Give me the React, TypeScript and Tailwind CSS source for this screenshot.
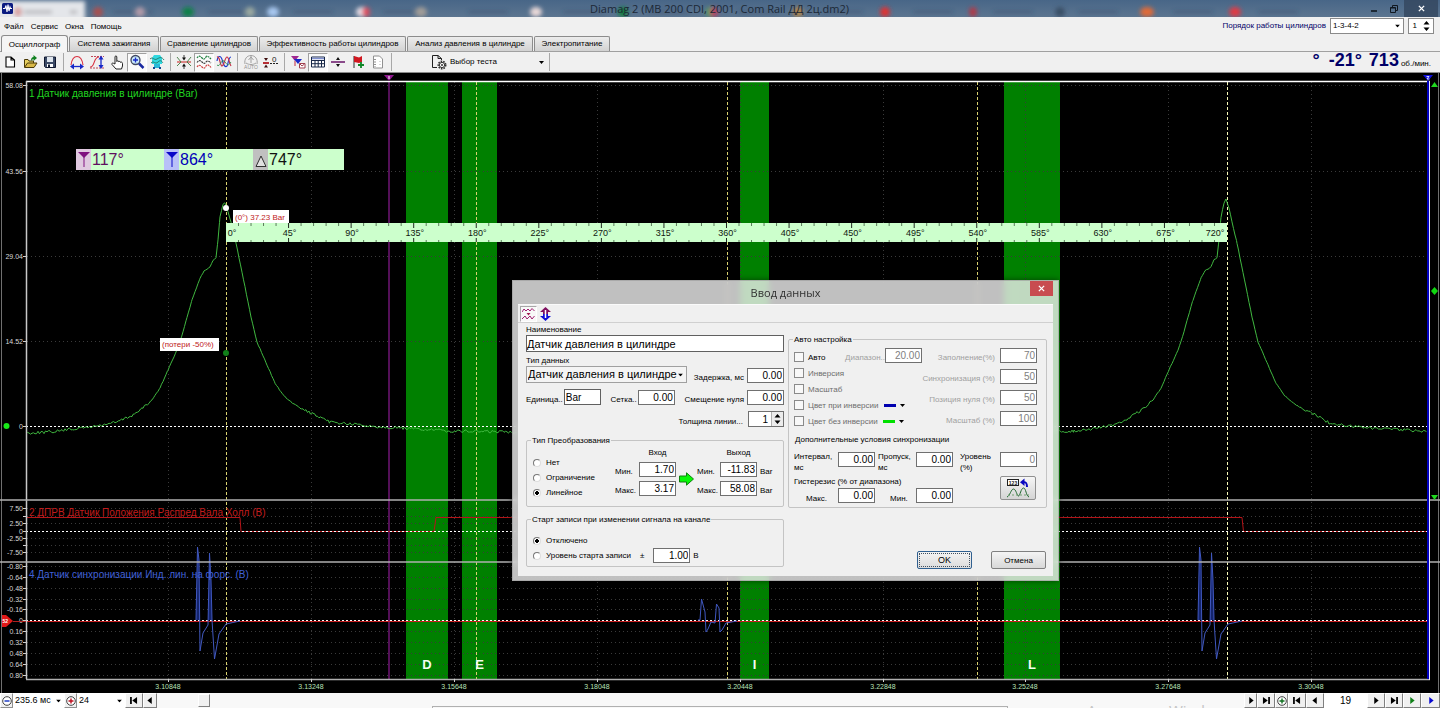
import { useId, type ReactNode } from "react";

/* ---------- shared controls ---------- */

function Dropdown({ label, value, className, selectClass }: { label: string; value: string; className: string; selectClass?: string }) {
  return (
    <div className={`relative ${className}`}>
      <select
        aria-label={label}
        defaultValue={value}
        className={`block h-full w-full appearance-none rounded-none bg-transparent outline-none ${selectClass ?? ""}`}
      >
        <option>{value}</option>
      </select>
      <svg viewBox="0 0 5 3" className="pointer-events-none absolute right-[3px] top-1/2 h-[3px] w-[5px] -translate-y-1/2">
        <path d="M0 0H5L2.5 3Z" fill="#000" />
      </svg>
    </div>
  );
}

function NumField({ label, value, disabled, className }: { label: string; value: string; disabled?: boolean; className?: string }) {
  return (
    <input
      aria-label={label}
      defaultValue={value}
      disabled={disabled}
      className={`h-[15px] w-[37px] shrink-0 rounded-none border border-[#707070] bg-white px-0 pr-px text-right text-[10px] leading-[12px] outline-none disabled:text-[#808080] ${className ?? ""}`}
    />
  );
}

function Radio({ name, label, checked, children }: { name: string; label: string; checked?: boolean; children?: ReactNode }) {
  const id = useId();
  return (
    <div className="flex h-[15px] items-center">
      <input
        id={id}
        type="radio"
        name={name}
        defaultChecked={checked}
        className="h-[8px] w-[8px] shrink-0 appearance-none rounded-full border border-[#777] border-r-[#ddd] border-b-[#ddd] bg-white checked:bg-[radial-gradient(circle,#000_40%,#fff_50%)]"
      />
      <label htmlFor={id} className="ml-[5px] whitespace-nowrap">{label}</label>
      {children}
    </div>
  );
}

function Check({ label, disabled, children }: { label: string; disabled?: boolean; children?: ReactNode }) {
  const id = useId();
  return (
    <div className="flex h-[16px] items-center">
      <input id={id} type="checkbox" disabled={disabled} className="h-[10px] w-[10px] shrink-0 appearance-none border border-[#8a8a8a] bg-[#f8f8f8]" />
      <label htmlFor={id} className={`ml-[4px] whitespace-nowrap ${disabled ? "text-[#6d6d6d]" : "text-black"}`}>{label}</label>
      {children}
    </div>
  );
}

function SpinArrows() {
  return (
    <svg viewBox="0 0 7 12" className="h-[12px] w-[7px] shrink-0">
      <path d="M3.5 1L6.5 4.5H.5ZM3.5 11L6.5 7.5H.5Z" fill="#000" />
    </svg>
  );
}

/* ---------- title, menu, tabs ---------- */

const blobs: [number, string, number][] = [
  [18, "#d8a0a0", 4], [98, "#a85050", 5], [140, "#b09aa8", 5], [188, "#10804a", 6], [250, "#9aa8a0", 5],
  [273, "#a8c8f0", 6], [362, "#e8e0e8", 6], [366, "#e05060", 4], [421, "#a09c98", 6], [536, "#e8d8d8", 6],
  [623, "#10803a", 5], [710, "#50a060", 4], [714, "#c04060", 4], [798, "#b8884a", 5], [885, "#e03030", 5],
  [973, "#b03a48", 4], [1060, "#3a5068", 5], [1147, "#e06a38", 7], [1235, "#e03a44", 6],
];

function TitleBar() {
  return (
    <header className="relative flex h-[17px] items-center overflow-hidden bg-[#4a6789]">
      <svg viewBox="0 0 1440 17" preserveAspectRatio="none" className="absolute inset-0 h-full w-full">
        <defs>
          <filter id="haze" x="-20%" y="-100%" width="140%" height="300%"><feGaussianBlur stdDeviation="2" /></filter>
          <linearGradient id="glass" x1="0" y1="0" x2="0" y2="1">
            <stop offset="0" stopColor="#486687" /><stop offset="1" stopColor="#5c7590" />
          </linearGradient>
        </defs>
        <rect width="1440" height="17" fill="url(#glass)" />
        <g filter="url(#haze)">
          <rect x="-5" y="1" width="90" height="22" fill="#e4e6ea" />
          <path d="M24 12H52M70 12H77" stroke="#b0b0b4" strokeWidth="3" />
          {[105, 200, 285, 375, 460, 555, 640, 730, 815, 905, 985, 1070, 1165, 1250].map((x) => (
            <path key={x} d={`M${x + 8} 12H${x + 48}`} stroke="#2c4260" strokeWidth="2" opacity="0.5" />
          ))}
          {blobs.map(([x, c, r]) => <ellipse key={x} cx={x} cy="12" rx={r} ry="5" fill={c} />)}
        </g>
      </svg>
      <svg viewBox="0 0 11 11" className="relative ml-[2px] h-[11px] w-[11px]">
        <rect width="11" height="11" rx="1.5" fill="#0a1a80" />
        <path d="M1 5.5H3L4 2.5L5 9L6 1.5L7 8L8 4L8.6 5.5H10" stroke="#fff" strokeWidth="1.1" fill="none" />
      </svg>
      <h1 className="relative flex-1 pb-px pl-[62px] text-center font-['Open_Sans','Noto_Sans',sans-serif] text-[11px] leading-[15px] text-[#1c2836]">
        Diamag 2 (MB 200 CDI, 2001, Com Rail ДД 2ц.dm2)
      </h1>
      <div className="relative flex h-full text-[#101820]">
        <button aria-label="Свернуть" className="flex h-full w-[20px] items-center justify-center">
          <svg viewBox="0 0 8 8" className="h-[8px] w-[8px]"><path d="M1 6H7" stroke="currentColor" strokeWidth="1.6" /></svg>
        </button>
        <button aria-label="Восстановить" className="flex h-full w-[20px] items-center justify-center">
          <svg viewBox="0 0 8 8" className="h-[8px] w-[8px]"><path d="M.5 2.5H5.5V7.5H.5ZM.5 3H5.5M2.5 2V.5H7.5V5.5H6" stroke="currentColor" fill="none" /></svg>
        </button>
        <button aria-label="Закрыть" className="mr-[2px] flex h-full w-[34px] items-center justify-center bg-[#33465e]/80 text-white">
          <svg viewBox="0 0 8 8" className="h-[7px] w-[7px]"><path d="M1 1L7 7M7 1L1 7" stroke="currentColor" strokeWidth="1.6" /></svg>
        </button>
      </div>
    </header>
  );
}

function MenuRow() {
  return (
    <div className="flex h-[20px] justify-between text-[8px]">
      <nav className="flex items-center gap-[7px] pl-[4px]">
        {["Файл", "Сервис", "Окна", "Помощь"].map((m) => <button key={m} className="leading-[12px]">{m}</button>)}
      </nav>
      <div className="flex items-start gap-[4px] pr-[6px] pt-px">
        <span className="leading-[16px] text-[#000068]">Порядок работы цилиндров</span>
        <Dropdown label="Порядок работы цилиндров" value="1-3-4-2" className="h-[16px] w-[74px] border border-[#8a8a8a] bg-white" selectClass="pl-[2px]" />
        <div className="flex h-[16px] w-[26px] items-center border border-[#8a8a8a] bg-white pr-[3px]">
          <input aria-label="Цилиндр" defaultValue="1" className="w-0 flex-1 bg-transparent pr-[6px] text-right outline-none" />
          <SpinArrows />
        </div>
      </div>
    </div>
  );
}

function Tabs() {
  const tabs: [string, string][] = [
    ["Система зажигания", "w-[90px]"],
    ["Сравнение цилиндров", "w-[98px]"],
    ["Эффективность работы цилиндров", "w-[147px]"],
    ["Анализ давления в цилиндре", "w-[126px]"],
    ["Электропитание", "w-[76px]"],
  ];
  return (
    <div role="tablist" className="flex h-[15px] items-end gap-px border-b border-[#a0a0a0] pl-px text-[8px]">
      <button role="tab" aria-selected className="relative z-10 -mb-px h-[17px] w-[67px] rounded-t-[3px] border border-b-0 border-[#8c8c8c] bg-[#f5f5f5] leading-[15px]">Осциллограф</button>
      {tabs.map(([t, w]) => (
        <button key={t} role="tab" aria-selected={false} className={`h-[15px] whitespace-nowrap rounded-t-[2px] border border-b-0 border-[#8c8c8c] bg-gradient-to-b from-[#ececec] to-[#d2d2d2] leading-[14px] ${w}`}>{t}</button>
      ))}
    </div>
  );
}

/* ---------- toolbar ---------- */

function Sep() {
  return <span className="flex w-[7px] justify-center"><span className="h-[18px] w-px bg-[#a8a8a8]" /></span>;
}

function Tool({ label, pressed, children }: { label: string; pressed?: boolean; children: ReactNode }) {
  return (
    <button aria-label={label} className={`flex h-[19px] w-[20px] items-center justify-center ${pressed ? "border border-[#a0a0a0] border-b-white border-r-white bg-[#fafafa]" : ""}`}>
      <svg viewBox="0 0 16 16" className="h-[16px] w-[16px] shrink-0 overflow-visible" fill="none">{children}</svg>
    </button>
  );
}

function Toolbar() {
  return (
    <div className="flex h-[21px] items-center justify-between border-b border-[#8a8a8a] bg-[#f0f0f0]">
      <div className="flex items-center">
        <Tool label="Новый"><path d="M4 3H9L12.500 6V13H4ZM9 3V6H12.500" fill="#fff" stroke="#000" strokeWidth="1.100" /></Tool>
        <Tool label="Открыть">
          <path d="M2.500 13V5.500H6L7 7H11.500V9" fill="#e8d060" stroke="#4a3a08" />
          <path d="M2.500 13.500L5.500 9H15L12 13.500Z" fill="#d8b848" stroke="#4a3a08" />
          <path d="M9 7C9 4 10 3 11.500 3V1L15 4L11.500 7V5C10.500 5 10 6 9 7Z" fill="#108020" />
        </Tool>
        <Tool label="Сохранить">
          <path d="M2.500 3H13.500V13.500H3.500L2.500 12.500Z" fill="#3c4a66" stroke="#101830" />
          <path d="M5 3H11V8H5Z" fill="#dfe6ee" /><path d="M5 10H11V13H5Z" fill="#fff" /><path d="M6 10.500H8V13H6Z" fill="#101830" />
        </Tool>
        <Sep />
        <Tool label="Период">
          <path d="M2 11C3 4 6 2.500 8 2.500S13 4 14 11" stroke="#d83040" strokeWidth="1.100" />
          <path d="M4 12.500H12" stroke="#1828c8" strokeWidth="1.300" /><path d="M1 12.500L5 9.500V15.500ZM15 12.500L11 9.500V15.500Z" fill="#1828c8" />
        </Tool>
        <Tool label="Амплитуда">
          <path d="M1 13C6 14 4 3 10 3" stroke="#d83040" strokeWidth="1.100" /><path d="M2 2.500H15M1 14H15" stroke="#c04858" strokeDasharray="2 1" />
          <path d="M12 5V12" stroke="#1828c8" strokeWidth="1.300" /><path d="M12 1.500L9.500 5.500H14.500ZM12 15L9.500 11H14.500Z" fill="#1828c8" />
        </Tool>
        <Tool label="Рука">
          <path d="M6 10V3C6 1.500 7.800 1.500 7.800 3V7.500C8 6.500 9.800 6.500 9.800 8C10 7.200 11.600 7.200 11.700 8.500C12 7.800 13.500 8 13.500 9.500V12L12.500 15H7L3 10.500C2.500 9.500 3.500 8.500 4.500 9.300Z" fill="#fff" stroke="#222" />
        </Tool>
        <Tool label="Лупа" pressed>
          <circle cx="6.500" cy="6" r="4.500" fill="#c8e8fa" stroke="#404860" strokeWidth="1.300" />
          <path d="M4 6H9M6.500 3.500V8.500" stroke="#1828c8" strokeWidth="1.300" /><path d="M10 9.500L14.500 14" stroke="#1828a0" strokeWidth="2.500" />
        </Tool>
        <Tool label="Печать сигналов">
          <path d="M5 1H11L13 4V10H3V4Z" fill="#30d8e0" /><path d="M5 10H11V14H5Z" fill="#28b8d8" />
          <path d="M1 5C4 2 5 7 8 5S13 3 15 6M2 9C5 6 6 11 9 8S13 8 14 9" stroke="#207868" strokeWidth="0.900" />
          <path d="M4 14H6M10 14H12" stroke="#104890" strokeWidth="2" />
        </Tool>
        <Sep />
        <Tool label="Сжать">
          <path d="M1 8H15" stroke="#d04040" strokeWidth="1.200" /><path d="M1 3L5 8L1 12M15 3L11 8L15 12" stroke="#407840" strokeWidth="0.900" />
          <path d="M8 6.500L6 3.500H10ZM8 9.500L6 12.500H10Z" fill="#101010" /><path d="M8 1V4M8 12V15" stroke="#101010" strokeWidth="0.800" />
        </Tool>
        <Tool label="Раздельно" pressed>
          <path d="M1 4C3 1 4 2 6 4S9 5 10 3S13 3 15 5" stroke="#208040" strokeWidth="1.200" strokeDasharray="2 0.700" />
          <path d="M1 8.500C3 6 4 6 6 8S9 9.500 10 8S13 7 15 9" stroke="#404040" strokeWidth="1.200" strokeDasharray="2 0.700" />
          <path d="M1 13C3 10.500 4 11 6 13S9 14 10 12S13 11 15 13.500" stroke="#d04040" strokeWidth="1.200" strokeDasharray="2 0.700" />
        </Tool>
        <Tool label="Совместно">
          <path d="M1 7C2 1 5 1 6.500 7S11 15 12 9S14 3 15 3" stroke="#1838d0" strokeWidth="1.200" />
          <path d="M1 3C4 2 4 12 6 12S9 3 11 3S13 9 15 12" stroke="#c83048" strokeWidth="1.200" />
          <path d="M1 11C4 14 5 5 8 7S11 14 15 8" stroke="#309050" strokeWidth="0.900" />
        </Tool>
        <Sep />
        <Tool label="Авто">
          <path d="M2 10C1 5 4 1.500 8 1.500S15 5 14 10M8 2V9M5.500 6L8 3L10.500 6M3 9C6 11 10 11 13 9" stroke="#a0a0a0" />
          <text x="8" y="15" textAnchor="middle" fontSize="5" fill="#909090">AUTO</text>
        </Tool>
        <Tool label="Ноль">
          <path d="M0 9H6" stroke="#b01820" strokeWidth="1.800" /><path d="M3 7L1 4H5ZM3 10.500L1 13.500H5Z" fill="#401010" />
          <path d="M7 9.500H16" stroke="#202020" strokeDasharray="2 1" /><text x="9" y="8" fontSize="8" fill="#202020">0</text>
        </Tool>
        <Sep />
        <Tool label="Метки">
          <path d="M1 2H9L5 7Z" fill="#a02890" /><path d="M4 5H12L8 10Z" fill="#1828c8" /><path d="M5 7V12" stroke="#c02840" />
          <path d="M9.500 9.500H15V14H9.500Z" fill="#fff" stroke="#a04050" /><path d="M10 10L12 12L14.500 10" stroke="#a04050" />
        </Tool>
        <Tool label="Таблица" pressed>
          <path d="M1.500 3H14.500V13H1.500ZM1.500 6.500H14.500M1.500 9.700H14.500M5 6V13M8.200 6V13M11.500 6V13" fill="#fff" stroke="#182848" strokeWidth="1" /><path d="M2 4.500H14" stroke="#8090d0" strokeWidth="1.500" />
        </Tool>
        <Tool label="Делитель">
          <path d="M1 8H15" stroke="#702070" strokeWidth="1.600" /><path d="M8 3L6 6H10ZM8 13L6 10H10Z" fill="#101010" />
        </Tool>
        <Tool label="Флаг">
          <path d="M4 2V14" stroke="#303030" /><path d="M4 2L9 3.500L12 2V8L9 9L4 8Z" fill="#d01820" /><path d="M11 8V14M8 11H14" stroke="#108828" strokeWidth="1.800" />
        </Tool>
        <Tool label="Отчёт">
          <path d="M3.500 2H9.500L12.500 5V14H3.500Z" fill="#fff" stroke="#909090" /><path d="M5 5V13" stroke="#707070" strokeDasharray="1 1.500" strokeWidth="1.500" /><path d="M10 7V13" stroke="#b0b0b0" strokeDasharray="1 2" />
        </Tool>
        <Sep />
        <button className="flex w-[151px] items-center pl-[36px] text-[8px] leading-[12px]">
          <svg viewBox="0 0 16 16" className="h-[16px] w-[16px] shrink-0" fill="none">
            <path d="M6 13.500H1.500V1.500H7L10.500 4.500V6M7 1.500V4.500H10.500" stroke="#202020" />
            <circle cx="11" cy="11" r="3.700" stroke="#303030" strokeWidth="1.600" strokeDasharray="1.600 1" /><circle cx="11" cy="11" r="2.600" stroke="#303030" fill="#fff" /><circle cx="11" cy="11" r="1" fill="#303030" />
          </svg>
          <span className="ml-[3px] flex-1 whitespace-nowrap text-left">Выбор теста</span>
          <svg viewBox="0 0 5 3" className="mr-[2px] h-[3px] w-[5px]"><path d="M0 0H5L2.500 3Z" fill="#000" /></svg>
        </button>
        <Sep />
      </div>
      <div className="flex items-baseline pr-[9px] text-[18px] font-bold leading-[20px] text-[#000068]">
        <span className="mr-[9px]">°</span>
        <span className="mr-[7px]">-21°</span>
        <span>713</span>
        <span className="ml-[2px] text-[8px] font-normal text-black">об./мин.</span>
      </div>
    </div>
  );
}

/* ---------- oscillogram ---------- */

const peak: [number, number][] = [
  [26, 433], [50, 432], [73, 429], [97, 426], [117, 422], [133, 415], [143, 408], [152, 400], [160, 388], [168, 370],
  [177, 350], [183, 332], [187, 317], [192, 300], [200, 278], [204, 271], [210, 267], [213, 260], [216, 258], [218, 240],
  [220, 217], [223, 204], [225, 203], [228, 212], [231, 222], [236, 243], [245, 287], [251, 317], [257, 342], [267, 365],
  [275, 383], [283, 395], [291, 402], [300, 408], [313, 414], [322, 419], [330, 422], [350, 424], [370, 426], [400, 428],
];

function pressurePath() {
  const knots: [number, number][] = [
    ...peak,
    [450, 431], [520, 432], [1000, 432],
    ...peak.slice(2).map(([x, y]): [number, number] => [x + 1001, y > 420 ? y + 2 : y === 204 ? 203 : y < 215 ? y - 4 : y]),
    [1427, 431],
  ];
  let seed = 7;
  let out = "";
  for (let i = 0; i < knots.length - 1; i++) {
    const [x0, y0] = knots[i];
    const [x1, y1] = knots[i + 1];
    const amp = y0 > 405 ? 2.8 : 0.9;
    for (let x = x0; x < x1; x += 1.5) {
      seed = (seed * 1103515245 + 12345) % 2147483648;
      const noise = (seed / 2147483648 - 0.5) * amp;
      out += `${out ? "L" : "M"}${x.toFixed(1)} ${(y0 + ((y1 - y0) * (x - x0)) / (x1 - x0) + noise).toFixed(1)}`;
    }
  }
  return out;
}

const pulse = "l1.500 -73l1.500 13l1 91l3 -18l5 -8l1.500 -72l1.500 27l1 40l2.500 39l4.500 -25l7 -10l14 -3";
const spikes = "l1.500 -73l1.500 13l.5 60ZM208 620l1.500 -67l1.500 27l1 40Z";
const gridX = [168, 311, 454, 597, 740, 883, 1025, 1168, 1311];
const timeLabels = ["3.10848", "3.13248", "3.15648", "3.18048", "3.20448", "3.22848", "3.25248", "3.27648", "3.30048"];
const bands: [number, number, string][] = [[406, 42, "D"], [462, 35, "E"], [740, 29, "I"], [1004, 56, "L"]];
const pressureScale: [number, string][] = [[85, "58.08"], [171, "43.56"], [256, "29.04"], [341, "14.52"], [426, "0"]];
const hallScale: [number, string][] = [[508, "7.50"], [516, ""], [523, "2.50"], [531, "0"], [538, "-2.50"], [545, ""], [552, "-7.50"]];
const syncScale: [number, string][] = [
  [566, "-0.80"], [577, "-0.64"], [588, "-0.48"], [599, "-0.32"], [609, "-0.16"], [620, "0"],
  [631, "0.16"], [642, "0.32"], [653, "0.48"], [664, "0.64"], [675, "0.80"],
];
const rows = [...pressureScale, ...hallScale, ...syncScale];

function Oscillogram() {
  const step = 1001 / 80;
  return (
    <svg viewBox="0 73 1440 620" className="block h-auto w-full bg-black" fill="none">
      <path d="M1.500 73V693M1438.500 73V693" stroke="#707070" />

      {bands.map(([x, w]) => <rect key={x} x={x} y="82" width={w} height="597" fill="#008000" />)}

      <g stroke="#3a3a3a" strokeDasharray="1 3">
        {gridX.map((x) => <path key={x} d={`M${x}.5 82V679`} />)}
        {rows.map(([y]) => <path key={y} d={`M27 ${y}.5H1427`} />)}
      </g>

      <path d="M389 82V679" stroke="#541058" strokeWidth="2" />
      <g stroke="#d8d070" strokeDasharray="3 2">
        {[226, 476, 727, 977].map((x) => <path key={x} d={`M${x}.5 82V679`} />)}
        <path d="M1227.500 82V679" stroke="#f8f8b8" />
      </g>

      {bands.map(([x, w, t]) => (
        <text key={t} x={x + w / 2} y="669" textAnchor="middle" fontSize="13" fontWeight="bold" fill="#f4fff0">{t}</text>
      ))}

      <path d="M26 621.500H1427" stroke="#c82020" />
      <path d="M26 517.500H240L241 531.500H434L436 517.500H1242L1243.500 531.500H1427" stroke="#b41418" />
      <g stroke="#fff" strokeDasharray="2 2">
        <path d="M26 426.500H1427" /><path d="M26 531.500H1427" /><path d="M26 620.500H1427" />
      </g>

      <path d={pressurePath()} stroke="#40b840" />
      <g fill="#14246c">
        <path d={`M196 620${spikes}`} />
        <path d={`M196 620${spikes}`} transform="translate(1002 0)" />
      </g>
      <g stroke="#4058c0">
        <path d={`M196 620${pulse}`} />
        <path d={`M1198 620${pulse}`} />
        <path d="M698 620H700L701.500 599L705 612L706 632L708 629L711 622L715 623L716.500 604L719 608L720 632L722 630L726 623L737 621" />
      </g>

      <path d="M26 81.500H1430" stroke="#fff" strokeWidth="1.500" />
      <path d="M26.500 81V679" stroke="#c8c8c8" strokeWidth="1.500" />
      <path d="M0 500H1440M0 562H1440M26 679.500H1430" stroke="#b0b0b0" strokeWidth="1.500" />
      <path d="M1428 81V679" stroke="#0000c0" strokeWidth="2" />
      <path d="M1429.500 81V680" stroke="#e8e8ff" />

      <g stroke="#d0d0d0">
        {rows.map(([y]) => <path key={y} d={`M23 ${y}.5H26`} />)}
        {gridX.map((x) => <path key={x} d={`M${x}.5 679V682`} />)}
      </g>
      <g fontSize="7" fill="#d8d8d8" textAnchor="end">
        {rows.map(([y, t]) => t && <text key={y} x="23" y={y + 3}>{t}</text>)}
      </g>
      <g fontSize="7" fill="#b8e0b8" textAnchor="middle">
        {timeLabels.map((t, i) => <text key={t} x={gridX[i]} y="689">{t}</text>)}
      </g>

      <text x="29" y="97" fontSize="10" fill="#20d820">1 Датчик давления в цилиндре (Bar)</text>
      <text x="29" y="516" fontSize="10" fill="#c01c1c">2 ДПРВ Датчик Положения Распред Вала Холл (В)</text>
      <text x="29" y="578" fontSize="10" fill="#4060d8">4 Датчик синхронизации Инд. лин. на форс. (В)</text>

      <path d="M384 75H394L389 81Z" fill="#901890" /><path d="M389 76V79" stroke="#fff" />
      <path d="M1423 75H1433L1428 81Z" fill="#1010e0" /><path d="M1426.500 76.500H1429L1427 79H1429.500" stroke="#fff" strokeWidth="0.800" />
      <path d="M1434.500 82L1438 87H1431Z" fill="#20d820" />
      <path d="M1434.500 500L1438 495H1431Z" fill="#20d820" />
      <path d="M1434.500 287L1438 291L1434.500 295L1431 291Z" fill="#10d810" />
      <circle cx="6.500" cy="426" r="3" fill="#18e818" />
      <path d="M2 615H6L13 621L6 627H2Z" fill="#e01818" />
      <text x="2.500" y="623" fontSize="5" fontWeight="bold" fill="#fff">52</text>
      <path d="M13 621.500H26" stroke="#b02020" />

      {/* crank angle ruler */}
      <rect x="226" y="223" width="1001" height="19" fill="#ccffcc" />
      {Array.from({ length: 79 }, (_, i) => i + 1).map((i) => (
        <path
          key={i}
          d={i % 5 ? `M${226 + i * step} 223v3M${226 + i * step} 242v-2` : `M${226 + i * step} 223v5M${226 + i * step} 242v-4`}
          stroke={i % 5 ? "#5a7a5a" : "#202820"}
        />
      ))}
      <g fontSize="9" fill="#101810" textAnchor="middle">
        {Array.from({ length: 17 }, (_, i) => (
          <text key={i} x={i === 0 ? 232 : i === 16 ? 1215 : 227 + i * step * 5} y="236">{`${i * 45}°`}</text>
        ))}
      </g>

      <circle cx="226" cy="208" r="3" fill="#fff" />
      <circle cx="226" cy="353" r="3" fill="#108018" />
      <rect x="233" y="210" width="56" height="13" fill="#fff" />
      <text x="235" y="220" fontSize="8" fill="#c02020">(0°) 37.23 Bar</text>
      <rect x="160" y="338" width="59" height="13" fill="#fff" />
      <text x="162" y="347" fontSize="8" fill="#c02020">(потери -50%)</text>
    </svg>
  );
}

function AngleReadout() {
  return (
    <div className="absolute left-[76px] top-[76px] flex h-[21px] w-[268px] items-center bg-[#ccffcc] text-[16px] leading-[21px]">
      <span className="flex w-[88px] items-center text-[#601060]">
        <svg viewBox="0 0 15 21" className="mr-px h-[21px] w-[15px]"><rect width="15" height="21" fill="#e0c8e0" /><path d="M2 3H14L8 9Z" fill="#801080" /><path d="M8 8V18" stroke="#801080" /></svg>
        117°
      </span>
      <span className="flex w-[89px] items-center text-[#0000b8]">
        <svg viewBox="0 0 15 21" className="mr-px h-[21px] w-[15px]"><rect width="15" height="21" fill="#b8c0f8" /><path d="M2 3H14L8 9Z" fill="#0808c8" /><path d="M8 8V18" stroke="#0808c8" /></svg>
        864°
      </span>
      <span className="flex items-center text-[#101010]">
        <svg viewBox="0 0 15 21" className="mr-px h-[21px] w-[15px]"><rect width="15" height="21" fill="#c0c0c0" /><path d="M8 7L13 17.500H3Z" stroke="#303030" fill="#e0e0e0" /></svg>
        747°
      </span>
    </div>
  );
}

/* ---------- data entry dialog ---------- */

function ColorPick({ label, children }: { label: string; children: ReactNode }) {
  return (
    <button aria-label={label} className="ml-[5px] flex items-center gap-[4px]">
      {children}
      <svg viewBox="0 0 5 3" className="h-[3px] w-[5px]"><path d="M0 0H5L2.500 3Z" fill="#000" /></svg>
    </button>
  );
}

function DialogLeft() {
  const nameId = useId();
  return (
    <div className="w-[258px] shrink-0 whitespace-nowrap">
      <label htmlFor={nameId} className="mt-px block">Наименование</label>
      <input id={nameId} defaultValue="Датчик давления в цилиндре" className="block h-[17px] w-full rounded-none border border-[#606060] bg-white px-0 text-[11px] outline-none" />
      <div className="mt-[3px]">Тип данных</div>
      <div className="flex h-[17px] items-end justify-between">
        <Dropdown label="Тип данных" value="Датчик давления в цилиндре" className="h-[17px] w-[161px] border border-[#a0a0a0] bg-[#f4f4f4] text-[11px]" selectClass="pl-px" />
        <div className="flex items-end gap-[3px]"><span>Задержка, мс</span><NumField label="Задержка, мс" value="0.00" /></div>
      </div>
      <div className="mt-[6px] flex h-[16px] items-end justify-between">
        <div className="flex items-end gap-px">
          <span>Единица..</span>
          <input aria-label="Единица" defaultValue="Bar" className="h-[16px] w-[37px] rounded-none border border-[#606060] bg-white px-px text-[10px] outline-none" />
        </div>
        <div className="flex items-end gap-px"><span>Сетка..</span><NumField label="Сетка" value="0.00" /></div>
        <div className="flex items-end gap-[3px]"><span>Смещение нуля</span><NumField label="Смещение нуля" value="0.00" /></div>
      </div>
      <div className="mt-[6px] flex h-[16px] items-end justify-end gap-[5px]">
        <span>Толщина линии...</span>
        <div className="flex h-[16px] w-[36px] items-center border border-[#707070] bg-white">
          <input aria-label="Толщина линии" defaultValue="1" className="w-0 flex-1 bg-transparent pr-[3px] text-right text-[10px] outline-none" />
          <span className="flex h-full items-center border-l border-[#b0b0b0] bg-[#ececec] px-[2px]"><SpinArrows /></span>
        </div>
      </div>

      <fieldset className="mt-[8px] h-[72px] min-w-0 rounded-[2px] border border-[#c4c4c4]">
        <legend className="ml-[4px] px-px">Тип Преобразования</legend>
        <div className="flex pt-px">
          <div className="w-[88px] shrink-0 pl-[6px] pt-[8px]">
            <Radio name="conv" label="Нет" />
            <Radio name="conv" label="Ограничение" />
            <Radio name="conv" label="Линейное" checked />
          </div>
          <div className="grid grid-cols-[24px_37px_21px_23px_37px_20px] grid-rows-[11px_15px_15px] gap-y-[4px]">
            <span className="col-start-2 text-center">Вход</span>
            <span className="col-start-5 text-center">Выход</span>
            <span className="col-start-1 self-end">Мин.</span>
            <NumField label="Вход мин." value="1.70" />
            <svg viewBox="0 0 15 14" className="row-span-2 mx-auto h-[14px] w-[15px] self-center"><path d="M.5 4H7.500V.8L14.500 7L7.500 13.200V10H.5Z" fill="#08f808" stroke="#108010" /></svg>
            <span className="self-end">Мин.</span>
            <NumField label="Выход мин." value="-11.83" />
            <span className="self-end pl-[3px]">Bar</span>
            <span className="col-start-1 self-end">Макс.</span>
            <NumField label="Вход макс." value="3.17" />
            <span className="col-start-4 self-end">Макс.</span>
            <NumField label="Выход макс." value="58.08" />
            <span className="self-end pl-[3px]">Bar</span>
          </div>
        </div>
      </fieldset>

      <fieldset className="mt-[7px] h-[53px] min-w-0 rounded-[2px] border border-[#c4c4c4]">
        <legend className="ml-[4px] px-px">Старт записи при изменении сигнала на канале</legend>
        <div className="pl-[6px] pt-[8px]">
          <Radio name="start" label="Отключено" checked />
          <Radio name="start" label="Уровень старта записи">
            <span className="mx-[9px]">±</span>
            <NumField label="Уровень старта" value="1.00" />
            <span className="ml-[3px]">В</span>
          </Radio>
        </div>
      </fieldset>
    </div>
  );
}

function DialogRight() {
  const fields: [string, string][] = [["Заполнение(%)", "70"], ["Синхронизация (%)", "50"], ["Позиция нуля (%)", "50"], ["Масштаб (%)", "100"]];
  return (
    <div className="w-[259px] shrink-0 pt-[11px]">
      <fieldset className="h-[174px] min-w-0 rounded-[2px] border border-[#c4c4c4]">
        <legend className="ml-[4px] px-px">Авто настройка</legend>
        <div className="flex justify-between pl-[5px] pr-[9px]">
          <div className="w-[128px] shrink-0 pt-[4px]">
            <Check label="Авто">
              <span className="ml-auto text-[#a0a0a0]">Диапазон..</span>
              <NumField label="Диапазон" value="20.00" disabled className="-mt-[4px]" />
            </Check>
            <Check label="Инверсия" disabled />
            <Check label="Масштаб" disabled />
            <Check label="Цвет при инверсии" disabled>
              <ColorPick label="Цвет при инверсии"><span className="h-[3px] w-[12px] bg-[#0000b0]" /></ColorPick>
            </Check>
            <Check label="Цвет без инверсии" disabled>
              <ColorPick label="Цвет без инверсии"><span className="h-[3px] w-[12px] bg-[#00e000]" /></ColorPick>
            </Check>
          </div>
          <div className="w-0 flex-1">
            {fields.map(([l, v]) => (
              <div key={l} className="flex h-[21px] items-center justify-end gap-[5px]">
                <span className="whitespace-nowrap pt-[4px] text-[#a0a0a0]">{l}</span>
                <NumField label={l} value={v} disabled />
              </div>
            ))}
          </div>
        </div>
        <div className="mt-[5px] pl-[6px]">Дополнительные условия синхронизации</div>
        <div className="mt-[6px] grid grid-cols-[44px_40px_38px_44px_40px_37px] grid-rows-[22px_14px_17px] pl-[5px]">
          <span>Интервал,<br />мс</span>
          <NumField label="Интервал, мс" value="0.00" className="mt-px" />
          <span>Пропуск,<br />мс</span>
          <NumField label="Пропуск, мс" value="0.00" className="mt-px" />
          <span>Уровень<br />(%)</span>
          <NumField label="Уровень (%)" value="0" disabled className="mt-px" />
          <span className="col-span-5 self-end whitespace-nowrap">Гистерезис (% от диапазона)</span>
          <button aria-label="Применить значения" className="row-span-2 mt-[3px] h-[24px] w-[36px] rounded-[2px] border border-[#909090] bg-gradient-to-b from-[#f6f6f6] to-[#d4d4d4]">
            <svg viewBox="0 0 34 22" className="block h-full w-full" fill="none">
              <rect x="6.500" y="2.500" width="11" height="6" fill="#fff" stroke="#202020" />
              <text x="12" y="7.500" textAnchor="middle" fontSize="5" fontWeight="bold" fill="#202020">123</text>
              <path d="M26 10C26 6 25 5 22.500 5" stroke="#0808c0" strokeWidth="2" /><path d="M19 5.200L23.500 1.500V9Z" fill="#0808c0" />
              <path d="M6 20C9 19 10 12 12.500 12S16 19 17.500 19S20 11 22.500 11S25 19 28 20" stroke="#206830" /><path d="M7 18H28" stroke="#70a070" strokeDasharray="2 2" />
            </svg>
          </button>
          <span className="self-end pl-[12px]">Макс.</span>
          <NumField label="Гистерезис макс." value="0.00" className="self-center" />
          <span className="self-end pl-[12px]">Мин.</span>
          <NumField label="Гистерезис мин." value="0.00" className="self-center" />
        </div>
      </fieldset>
      <div className="mt-[43px] flex justify-end gap-[19px] pr-px">
        <button className="h-[18px] w-[55px] rounded-[2px] border border-[#306090] bg-gradient-to-b from-[#f4f4f4] to-[#dcdcdc] p-px text-[9px]">
          <span className="block border border-dotted border-[#405060] leading-[12px]">OK</span>
        </button>
        <button className="h-[18px] w-[55px] rounded-[2px] border border-[#808080] bg-gradient-to-b from-[#f4f4f4] to-[#d8d8d8]">Отмена</button>
      </div>
    </div>
  );
}

function DataDialog() {
  return (
    <section
      role="dialog"
      aria-label="Ввод данных"
      className="absolute left-[512px] top-[207px] w-[547px] border border-[#9a9a9a]/60 bg-[#f0f0f0]/80 px-[5px] pb-[4px] text-[8px] leading-[11px] text-black shadow-[0_0_6px_rgba(0,0,0,0.5)] backdrop-blur-[3px]"
    >
      <div className="relative flex h-[23px] justify-center">
        <h2 className="font-['Open_Sans','Noto_Sans',sans-serif] text-[11px] leading-[23px] text-[#303030]">Ввод данных</h2>
        <button aria-label="Закрыть" className="absolute right-0 top-0 flex h-[15px] w-[23px] items-center justify-center bg-[#c84c50] text-white">
          <svg viewBox="0 0 8 8" className="h-[7px] w-[7px]"><path d="M1 1L7 7M7 1L1 7" stroke="currentColor" strokeWidth="1.500" /></svg>
        </button>
      </div>
      <div className="bg-[#f0f0f0] pb-[7px]">
        <div className="flex h-[19px] items-center border-b border-[#d0d0d0] border-t border-t-[#fafafa] pl-[2px]">
          <button aria-label="Сигнал" className="flex h-[16px] w-[17px] items-center justify-center border border-[#a8a8a8] border-b-white border-r-white bg-[#f8f8f8]">
            <svg viewBox="0 0 13 13" className="h-[13px] w-[13px]" fill="none">
              <path d="M0 5L2 2L4 4L6 2L8 4L10 1.500L12.500 4M0 12L3 9L5 12L8 9L10 12L12.500 9" stroke="#a02070" /><path d="M4.500 6H8.500L6.500 8.500Z" fill="#a01850" />
            </svg>
          </button>
          <button aria-label="Масштаб по вертикали" className="flex h-[16px] w-[17px] items-center justify-center">
            <svg viewBox="0 0 13 14" className="h-[14px] w-[13px]">
              <path d="M6.500 0L12 5H9V7H4V5H1Z" fill="#801060" /><path d="M6.500 14L12 9H9V7H4V9H1Z" fill="#1010d8" /><path d="M6.500 3V11" stroke="#fff" strokeWidth="1.500" />
            </svg>
          </button>
        </div>
        <div className="flex justify-between pl-[8px] pr-[6px]">
          <DialogLeft />
          <DialogRight />
        </div>
      </div>
    </section>
  );
}

/* ---------- bottom bar ---------- */

function BarButton({ label, path, color, width }: { label: string; path: string; color?: string; width: string }) {
  return (
    <button aria-label={label} className={`flex h-full items-center justify-center border border-white border-b-[#808080] border-r-[#808080] bg-[#f0f0f0] ${width}`}>
      <svg viewBox="0 0 9 8" className="h-[7px] w-[8px] shrink-0"><path d={path} fill={color ?? "#000"} /></svg>
    </button>
  );
}

function ZoomButton({ label, plus, color }: { label: string; plus?: boolean; color: string }) {
  return (
    <button aria-label={label} className="flex h-full w-[13px] items-center justify-center border border-white border-b-[#909090] border-r-[#909090] bg-[#f0f0f0]">
      <svg viewBox="0 0 10 10" className="h-[10px] w-[10px] shrink-0" fill="none">
        <circle cx="5" cy="5" r="4.300" stroke="#404040" fill="#fff" />
        <path d={plus ? "M2.500 5H7.500M5 2.500V7.500" : "M2.500 5H7.500"} stroke={color} strokeWidth="1.400" />
      </svg>
    </button>
  );
}

const first = "M0 0H2V8H0ZM8 0V8L2.500 4Z";
const last = "M7 0H9V8H7ZM1 0V8L6.500 4Z";
const left = "M6.500 0V8L1.500 4Z";
const right = "M2.500 0V8L7.500 4Z";

function BottomBar() {
  return (
    <footer className="relative flex h-[15px] items-stretch overflow-hidden bg-[#f8f8f8] text-[9px]">
      <ZoomButton label="Уменьшить" color="#1030c0" />
      <Dropdown label="Развёртка" value="235.6 мс" className="w-[51px] bg-white" selectClass="pl-[2px]" />
      <ZoomButton label="Увеличить" plus color="#c01020" />
      <Dropdown label="Масштаб" value="24" className="w-[48px] bg-white" selectClass="pl-[2px]" />
      <BarButton label="В начало" path={first} width="w-[18px]" />
      <BarButton label="Назад" path={left} width="w-[14px]" />
      <input
        type="range"
        aria-label="Прокрутка"
        min={0}
        max={1000}
        defaultValue={38}
        className="min-w-0 flex-1 appearance-none bg-transparent [&::-webkit-slider-thumb]:h-[13px] [&::-webkit-slider-thumb]:w-[12px] [&::-webkit-slider-thumb]:appearance-none [&::-webkit-slider-thumb]:border [&::-webkit-slider-thumb]:border-white [&::-webkit-slider-thumb]:border-b-[#808080] [&::-webkit-slider-thumb]:border-r-[#808080] [&::-webkit-slider-thumb]:bg-[#f0f0f0]"
      />
      <span className="pointer-events-none absolute bottom-0 left-[30%] h-[2px] w-[40%] border border-b-0 border-[#b0b0b0]" />
      <span className="pointer-events-none absolute left-[1087px] top-[9px] whitespace-nowrap font-['Open_Sans','Noto_Sans',sans-serif] text-[15px] leading-[16px] text-[#c4c4c4]">Активация Windows</span>
      <BarButton label="Вперёд" path={right} width="w-[13px]" />
      <BarButton label="В конец" path={last} width="w-[18px]" />
      <ZoomButton label="Добавить кадр" plus color="#107020" />
      <BarButton label="Первый кадр" path={first} width="w-[18px]" />
      <BarButton label="Предыдущий кадр" path={left} width="w-[18px]" />
      <input aria-label="Номер кадра" defaultValue="19" className="w-[43px] rounded-none bg-white text-center text-[10px] outline-none" />
      <BarButton label="Следующий кадр" path={right} width="w-[18px]" />
      <BarButton label="Последний кадр" path={last} width="w-[18px]" />
      <BarButton label="Воспроизвести" path={right} color="#108018" width="w-[18px]" />
      <BarButton label="Запись" path={right} color="#0808d0" width="w-[19px]" />
    </footer>
  );
}

export default function App() {
  return (
    <div className="flex min-h-screen w-full flex-col bg-[#f0f0f0] font-['Liberation_Sans',Arial,sans-serif] text-black">
      <TitleBar />
      <MenuRow />
      <Tabs />
      <Toolbar />
      <main className="relative">
        <Oscillogram />
        <AngleReadout />
        <DataDialog />
      </main>
      <BottomBar />
    </div>
  );
}
